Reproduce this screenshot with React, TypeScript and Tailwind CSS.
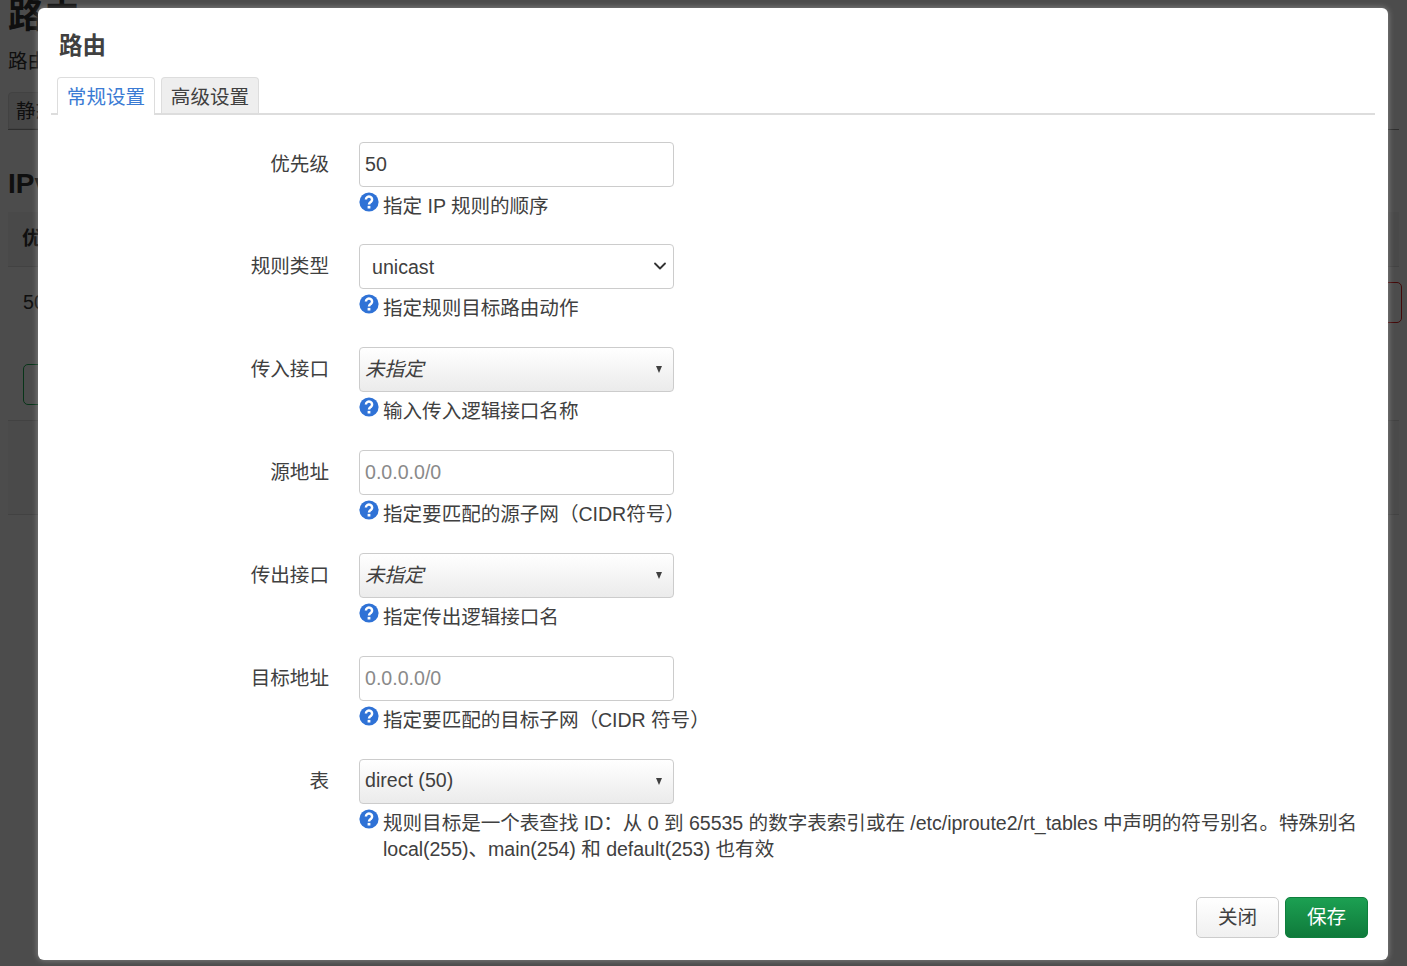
import React from 'react';
import { ChevronDown } from 'lucide-react';

const fontStack = "font-['Liberation_Sans','Noto_Sans_CJK_SC',sans-serif]";

const HelpIcon: React.FC = () => (
    <svg viewBox="0 0 20 20" className="w-[20px] h-[20px] shrink-0">
        <circle cx="10" cy="10" r="9.6" fill="#2f72d6" />
        <path d="M6.9 7.5a3.1 3 0 1 1 5 2.4c-1.2.9-1.9 1.3-1.9 2.7" fill="none" stroke="#ffffff" strokeWidth="2.5" />
        <rect x="8.6" y="13.9" width="2.8" height="2.6" fill="#ffffff" />
    </svg>
);

const Help: React.FC<{ children: React.ReactNode }> = ({ children }) => (
    <div className="flex items-start gap-[4px] mt-[5px]">
        <HelpIcon />
        <div className="flex-1 pt-[1px] leading-[26px] text-[19.6px] tracking-[-0.05px] text-[#404040]">{children}</div>
    </div>
);

const Row: React.FC<{ label: string; help: React.ReactNode; children: React.ReactNode }> = ({ label, help, children }) => (
    <div className="flex mb-[25.85px]">
        <label className="w-[278px] shrink-0 pt-[8px] text-right leading-[28px] text-[19.6px] text-[#404040]">{label}</label>
        <div className="ml-[30px] flex-1">
            {children}
            <Help>{help}</Help>
        </div>
    </div>
);

const TextField: React.FC<{ value?: string; placeholder?: string }> = ({ value, placeholder }) => (
    <input
        readOnly
        value={value}
        placeholder={placeholder}
        className="block w-[315px] h-[45px] px-[5px] rounded-[4px] border border-[#cccccc] bg-white text-[19.6px] text-[#404040] placeholder:text-[#8a8a8a] outline-none"
    />
);

const Dropdown: React.FC<{ text: string; italic?: boolean }> = ({ text, italic }) => (
    <div className="flex items-center justify-between w-[315px] h-[45px] pl-[5px] pr-[11px] rounded-[4px] border border-[#cccccc] bg-gradient-to-b from-white to-[#ebebeb] text-[19.6px] text-[#404040]">
        <span className={italic ? 'italic' : ''}>{text}</span>
        <span className="w-0 h-0 border-x-[3.5px] border-x-transparent border-t-[7px] border-t-[#404040]" />
    </div>
);

const NativeSelect: React.FC<{ value: string }> = ({ value }) => (
    <div className="relative w-[315px] h-[45px]">
        <select className="block w-full h-full pl-[12px] pt-[2px] appearance-none rounded-[4px] border border-[#cccccc] bg-white text-[19.6px] text-[#404040] outline-none">
            <option>{value}</option>
        </select>
        <ChevronDown className="absolute right-[4px] top-[12px] w-[20px] h-[20px] text-[#333333] pointer-events-none" strokeWidth={2.2} />
    </div>
);

const BackgroundPage: React.FC = () => (
    <div className="h-[966px] overflow-hidden bg-white px-[8px] text-[#333333]">
        <h1 className="font-bold text-[36px] leading-[36px] -mt-[2px]">路由</h1>
        <p className="mt-[14px] text-[19.6px] leading-[26px]">路由指定了</p>
        <div className="mt-[18px] border-b border-[#999999] h-[38px] flex">
            <div className="w-[60px] border border-[#dddddd] rounded-t-[4px] bg-[#eeeeee] pl-[7px] pt-[4px] text-[19.6px]">静态</div>
        </div>
        <h2 className="mt-[37px] font-bold text-[28px] leading-[34px]">IPv4</h2>
        <div className="mt-[11px] h-[55px] border-b border-[#dddddd] bg-[#f5f5f5] pl-[14px] pt-[12px] font-bold text-[19.6px]">优先级</div>
        <div className="flex justify-between h-[56px] pl-[15px] pt-[15px] text-[19.6px]">
            <span className="pt-[6px]">50</span>
            <span className="w-[40px] h-[41px] border border-[#e02020] rounded-[5px] -mr-[3px]" />
        </div>
        <div className="mt-[41px] ml-[15px] w-[60px] h-[41px] border border-[#18b050] rounded-[5px]" />
        <div className="mt-[15px] h-[95px] border-y border-[#dddddd] bg-[#f7f7f7]" />
    </div>
);

export default function App() {
    return (
        <div className={`relative h-[966px] overflow-hidden ${fontStack}`}>
            <BackgroundPage />
            <div className="absolute inset-0 bg-black/70">
                <div className="absolute left-[38px] top-[8px] w-[1350px] h-[952px] rounded-[6px] bg-white shadow-[0_0_6px_rgba(255,255,255,0.35)] pl-[13px] pr-[13px] flex flex-col">
                    <h4 className="mt-[22px] pl-[8px] font-bold text-[23.5px] leading-[32px] text-[#404040]">路由</h4>
                    <div className="mt-[15px] flex gap-[6px] pl-[6px] h-[38px] border-b-[2px] border-[#dddddd]">
                        <div className="w-[98px] h-[38px] rounded-t-[4px] border border-b-0 border-[#dddddd] bg-white text-center text-[19.6px] leading-[38px] text-[#3b7bd4]">常规设置</div>
                        <div className="w-[98px] h-[36px] rounded-t-[4px] border border-b-0 border-[#dddddd] bg-[#eeeeee] text-center text-[19.6px] leading-[38px] text-[#404040]">高级设置</div>
                    </div>
                    <div className="mt-[26.6px]">
                        <Row label="优先级" help="指定 IP 规则的顺序">
                            <TextField value="50" />
                        </Row>
                        <Row label="规则类型" help="指定规则目标路由动作">
                            <NativeSelect value="unicast" />
                        </Row>
                        <Row label="传入接口" help="输入传入逻辑接口名称">
                            <Dropdown text="未指定" italic />
                        </Row>
                        <Row label="源地址" help="指定要匹配的源子网（CIDR符号）">
                            <TextField placeholder="0.0.0.0/0" />
                        </Row>
                        <Row label="传出接口" help="指定传出逻辑接口名">
                            <Dropdown text="未指定" italic />
                        </Row>
                        <Row label="目标地址" help="指定要匹配的目标子网（CIDR 符号）">
                            <TextField placeholder="0.0.0.0/0" />
                        </Row>
                        <Row
                            label="表"
                            help="规则目标是一个表查找 ID：从 0 到 65535 的数字表索引或在 /etc/iproute2/rt_tables 中声明的符号别名。特殊别名 local(255)、main(254) 和 default(253) 也有效"
                        >
                            <Dropdown text="direct (50)" />
                        </Row>
                    </div>
                    <div className="absolute right-[20px] bottom-[22px] flex gap-[6px]">
                        <button className="w-[83px] h-[41px] rounded-[5px] border border-[#cccccc] bg-gradient-to-b from-white to-[#f0f0f0] text-[19.6px] text-[#404040]">关闭</button>
                        <button className="w-[83px] h-[41px] rounded-[5px] border border-[#0f7f3d] bg-gradient-to-b from-[#1ca052] to-[#0f7a3b] text-[19.6px] text-white">保存</button>
                    </div>
                </div>
            </div>
        </div>
    );
}
